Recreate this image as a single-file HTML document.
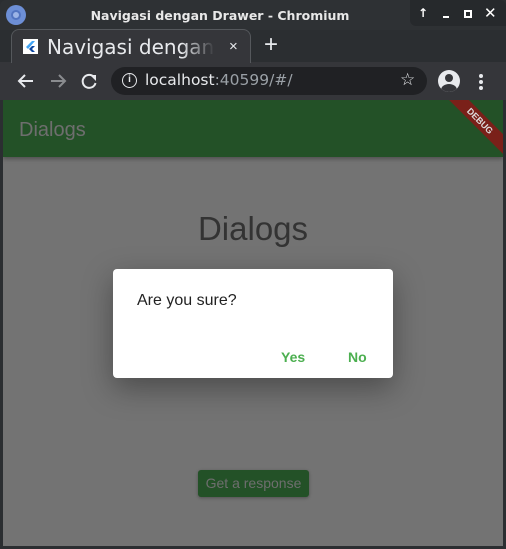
<!DOCTYPE html><html><head><style>
*{margin:0;padding:0;box-sizing:border-box}
body{width:506px;height:549px;background:#2b2e31;font-family:"Liberation Sans","DejaVu Sans",sans-serif;position:relative;overflow:hidden}
.abs{position:absolute}
</style></head><body>
<div class="abs" style="left:0;top:0;width:506px;height:30px;background:#2e3134;border-radius:6px 6px 0 0"></div>
<div class="abs" style="left:6px;top:5px;width:20px;height:20px;border-radius:50%;background:#6d8fd6"><div class="abs" style="left:5px;top:5px;width:10px;height:10px;border-radius:50%;background:#9cb4e6;border:2px solid #5274c0"></div></div>
<div class="abs" style="left:0;top:8px;width:440px;text-align:center;color:#e8e8e8;font-size:12.5px;font-weight:bold;font-family:'DejaVu Sans',sans-serif">Navigasi dengan Drawer - Chromium</div>
<div class="abs" style="left:410px;top:0;width:96px;height:26px;background:#26292c;border-radius:0 6px 0 6px"></div>
<div class="abs" style="left:418px;top:6px;color:#fff;font-size:12px;font-weight:bold;font-family:'DejaVu Sans'">↑</div>
<div class="abs" style="left:443px;top:16px;width:6px;height:2px;background:#fff"></div>
<div class="abs" style="left:464px;top:10px;width:8px;height:8px;border:2px solid #fff"></div>
<div class="abs" style="left:484px;top:4px;color:#fff;font-size:15px;font-weight:bold">✕</div>
<div class="abs" style="left:0;top:30px;width:506px;height:70px;background:#35363a"></div>
<div class="abs" style="left:0;top:30px;width:506px;height:32px;background:#2b2e31"></div>
<div class="abs" style="left:11px;top:29px;width:240px;height:34px;background:#35363a;border-radius:8px 8px 0 0;border:1px solid #55585c;border-bottom:none"></div>
<div class="abs" style="left:23px;top:39px;width:15px;height:15px;background:#fff"><svg width="15" height="15"><path d="M9 2L3 8l2 2 7-8z" fill="#42a5f5"/><path d="M6 10l3 3h3l-3-3 3-3H9z" fill="#0d47a1"/></svg></div>
<div class="abs" style="left:47px;top:35px;color:#e8eaed;font-size:20px;font-family:'DejaVu Sans',sans-serif;width:168px;overflow:hidden;white-space:nowrap;-webkit-mask-image:linear-gradient(90deg,#000 80%,transparent)">Navigasi dengan</div>
<div class="abs" style="left:229px;top:38px;color:#e8eaed;font-size:15px">×</div>
<div class="abs" style="left:264px;top:31px;color:#e8eaed;font-size:24px">+</div>
<svg class="abs" style="left:16px;top:72px" width="20" height="18"><path d="M17 9H3M9 3L3 9l6 6" stroke="#e8eaed" stroke-width="2" fill="none"/></svg>
<svg class="abs" style="left:48px;top:72px" width="20" height="18"><path d="M3 9h14M11 3l6 6-6 6" stroke="#8a8c8f" stroke-width="2" fill="none"/></svg>
<svg class="abs" style="left:80px;top:72px" width="18" height="18"><path d="M14 5A6.5 6.5 0 1 0 15.5 11" stroke="#e8eaed" stroke-width="2" fill="none"/><path d="M10 3h6v6z" fill="#e8eaed"/></svg>
<div class="abs" style="left:111px;top:67px;width:316px;height:28px;background:#202124;border-radius:14px"></div>
<div class="abs" style="left:122px;top:73px;width:15px;height:15px;border:1.5px solid #e8eaed;border-radius:50%;color:#e8eaed;font-size:10px;text-align:center;line-height:12px;font-weight:bold">i</div>
<div class="abs" style="left:145px;top:71px;font-size:15.5px;font-family:'DejaVu Sans',sans-serif;color:#e8eaed">localhost<span style="color:#9aa0a6">:40599/#/</span></div>
<div class="abs" style="left:400px;top:70px;color:#e8eaed;font-size:17px">☆</div>
<div class="abs" style="left:438px;top:70px;width:22px;height:22px;border-radius:50%;background:#e8eaed;overflow:hidden"><div class="abs" style="left:7px;top:4px;width:8px;height:8px;border-radius:50%;background:#35363a"></div><div class="abs" style="left:3px;top:14px;width:16px;height:12px;border-radius:50%;background:#35363a"></div></div>
<div class="abs" style="left:479px;top:74px;width:4px;height:4px;border-radius:50%;background:#e8eaed;box-shadow:0 6px 0 #e8eaed,0 12px 0 #e8eaed"></div>
<div class="abs" style="left:3px;top:100px;width:500px;height:446px;background:#737373;overflow:hidden">
<div class="abs" style="left:0;top:0;width:500px;height:57px;background:#235127;box-shadow:0 2px 4px rgba(0,0,0,.3)"></div>
<div class="abs" style="left:16px;top:19px;color:#6e6e6e;font-size:20px">Dialogs</div>
<div class="abs" style="left:427px;top:14px;width:100px;height:14px;background:#7a2019;transform:rotate(45deg);color:#ddd;font-size:9px;font-weight:bold;text-align:center;line-height:14px">DEBUG</div>
<div class="abs" style="left:0;top:110px;width:500px;text-align:center;color:#333;font-size:33px">Dialogs</div>
<div class="abs" style="left:195px;top:370px;width:111px;height:27px;background:#235127;border-radius:3px;color:#6e6e6e;font-size:14px;text-align:center;line-height:27px;box-shadow:0 1px 3px rgba(0,0,0,.3)">Get a response</div>
<div class="abs" style="left:110px;top:169px;width:280px;height:109px;background:#fff;border-radius:4px;box-shadow:0 10px 30px rgba(0,0,0,.35)">
<div class="abs" style="left:24px;top:23px;color:#222;font-size:16px">Are you sure?</div>
<div class="abs" style="left:168px;top:80px;color:#4caf50;font-size:14px;font-weight:bold">Yes</div>
<div class="abs" style="left:235px;top:80px;color:#4caf50;font-size:14px;font-weight:bold">No</div>
</div></div>
</body></html>
